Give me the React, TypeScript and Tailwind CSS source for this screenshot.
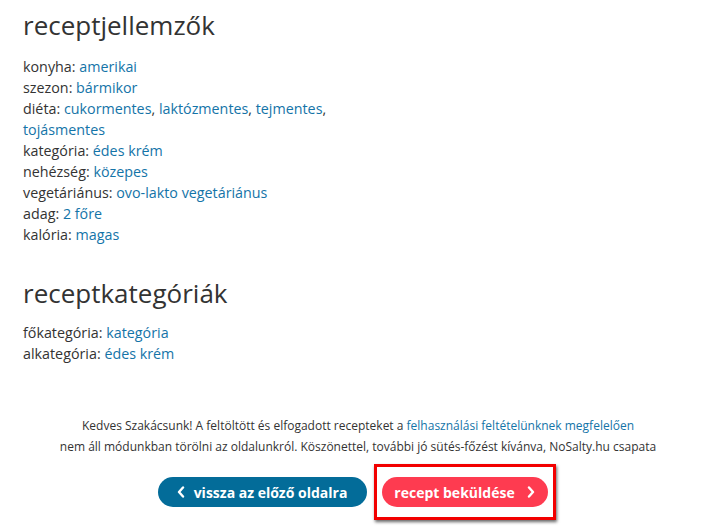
import React from 'react';

const features: { label: string; values: string[] }[] = [
  { label: 'konyha', values: ['amerikai'] },
  { label: 'szezon', values: ['bármikor'] },
  { label: 'diéta', values: ['cukormentes', 'laktózmentes', 'tejmentes', 'tojásmentes'] },
  { label: 'kategória', values: ['édes krém'] },
  { label: 'nehézség', values: ['közepes'] },
  { label: 'vegetáriánus', values: ['ovo-lakto vegetáriánus'] },
  { label: 'adag', values: ['2 főre'] },
  { label: 'kalória', values: ['magas'] },
];

const categories: { label: string; values: string[] }[] = [
  { label: 'főkategória', values: ['kategória'] },
  { label: 'alkategória', values: ['édes krém'] },
];

const Row = ({ label, values }: { label: string; values: string[] }) => (
  <li className="max-w-[320px]">
    {label}:{' '}
    {values.map((v, i) => (
      <React.Fragment key={v}>
        <a href="#" className="text-[#1474a8]">{v}</a>
        {i < values.length - 1 ? ', ' : ''}
      </React.Fragment>
    ))}
  </li>
);

const Chevron = ({ dir }: { dir: 'left' | 'right' }) => (
  <svg width="8" height="12" viewBox="0 0 8 12" fill="none">
    <path
      d={dir === 'left' ? 'M6 1.5 L2 6 L6 10.5' : 'M2 1.5 L6 6 L2 10.5'}
      stroke="white"
      strokeWidth="2.4"
      strokeLinecap="round"
      strokeLinejoin="round"
    />
  </svg>
);

export default function App() {
  return (
    <div
      className="w-[710px] h-[528px] bg-white text-[#333333] overflow-hidden"
      style={{ fontFamily: '"Open Sans", sans-serif' }}
    >
      <div className="px-[23px] pt-[7px]">
        <h2 className="text-[26px] leading-[36px] mb-[13px]">receptjellemzők</h2>
        <ul className="text-[14.3px] leading-[21px]">
          {features.map((f) => <Row key={f.label} {...f} />)}
        </ul>

        <h2 className="text-[26px] leading-[36px] mt-[30px] mb-[11px]">receptkategóriák</h2>
        <ul className="text-[14.3px] leading-[21px]">
          {categories.map((f) => <Row key={f.label} {...f} />)}
        </ul>
      </div>

      <p className="mt-[51px] text-center text-[12px] leading-[21px] pl-[6px]">
        Kedves Szakácsunk! A feltöltött és elfogadott recepteket a{' '}
        <a href="#" className="text-[#1474a8]">felhasználási feltételünknek megfelelően</a>
        <br />
        nem áll módunkban törölni az oldalunkról. Köszönettel, további jó sütés-főzést kívánva, NoSalty.hu csapata
      </p>

      <div className="flex items-center justify-center gap-[7px] mt-[7px] pl-[3px]">
        <button className="h-[30px] w-[209px] rounded-full bg-[#036c99] text-white text-[14px] font-bold flex items-center justify-center gap-[9px]">
          <Chevron dir="left" />
          vissza az előző oldalra
        </button>
        <div className="border-[3px] border-[#f20000] shadow-[1px_2px_3px_rgba(0,0,0,0.6)] px-[5px] py-[10px]">
          <button className="h-[30px] w-[166px] rounded-full bg-[#fe3b50] text-white text-[14px] font-bold flex items-center justify-center gap-[12px]">
            recept beküldése
            <Chevron dir="right" />
          </button>
        </div>
      </div>
    </div>
  );
}
